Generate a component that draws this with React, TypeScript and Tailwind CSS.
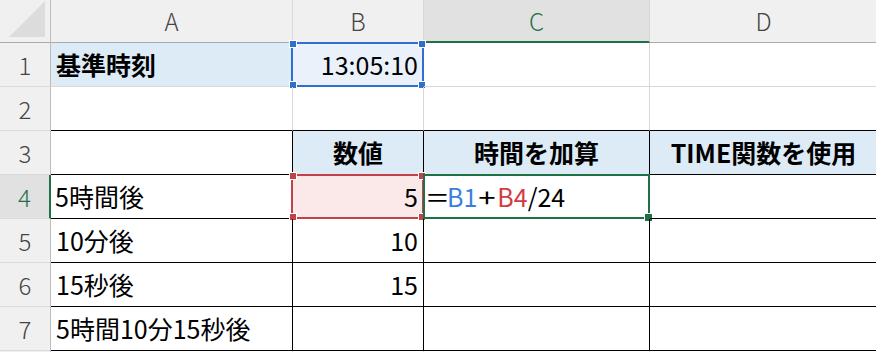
import React from "react";

const FONT = { fontFamily: '"Noto Sans CJK JP", "Noto Sans", sans-serif' };

type CellProps = {
  className: string;
  children?: React.ReactNode;
};

function Cell({ className, children }: CellProps) {
  return <div className={"relative flex items-center overflow-visible " + className}>{children}</div>;
}

function Handles({ color }: { color: string }) {
  const base = "absolute w-[6px] h-[6px] outline outline-1 outline-white " + color;
  return (
    <>
      <span className={base + " -left-[3px] -top-[3px]"} />
      <span className={base + " -right-[3px] -top-[3px]"} />
      <span className={base + " -left-[3px] -bottom-[3px]"} />
      <span className={base + " -right-[3px] -bottom-[3px]"} />
    </>
  );
}

const colHead = "justify-center bg-[#f0f0f0] border-r border-b border-r-[#d8d8d8] border-b-[#ababab] text-[24px] font-light text-[#444]";
const rowHead = "justify-center bg-[#f0f0f0] border-r border-b border-r-[#bcbcbc] border-b-[#dadada] text-[24px] font-light text-[#444]";
const plain = "border-r border-b border-[#d8d8d8]";
const gridBottomBlack = "border-r border-b border-r-[#d8d8d8] border-b-black";
const boxed = "border-r border-b border-black";

export default function App() {
  return (
    <div className="w-[876px] h-[352px] overflow-hidden bg-white text-[25px] text-black" style={FONT}>
      <div className="grid grid-cols-[51px_242px_131px_226px_228px] grid-rows-[43px_44px_44px_44px_44px_44px_44px_44px_44px]">
        {/* column headers */}
        <Cell className="bg-[#f0f0f0] border-r border-b border-r-[#bcbcbc] border-b-[#ababab]">
          <svg className="absolute right-[5px] bottom-[5px]" width="36" height="36" viewBox="0 0 36 36">
            <polygon points="36,0 36,36 0,36" fill="#dcdcdc" />
          </svg>
        </Cell>
        <Cell className={colHead}>A</Cell>
        <Cell className={colHead}>B</Cell>
        <Cell className="justify-center bg-[#e1e1e1] border-r border-r-[#d8d8d8] border-b-2 border-b-[#1e7145] text-[24px] font-light text-[#1e7145]">C</Cell>
        <Cell className={colHead}>D</Cell>

        {/* row 1 */}
        <Cell className={rowHead}>1</Cell>
        <Cell className={plain + " bg-[#ddebf7] pl-[5px] font-bold"}>基準時刻</Cell>
        <Cell className={plain + " bg-[#eaf1fa] justify-end pr-[5px]"}>
          13:05:10
          <div className="absolute -left-[2px] -top-[1px] -right-[1px] -bottom-[1px] border-2 border-[#2f6fd0]">
            <Handles color="bg-[#2f6fd0]" />
          </div>
        </Cell>
        <Cell className={plain} />
        <Cell className={plain} />

        {/* row 2 */}
        <Cell className={rowHead}>2</Cell>
        <Cell className={gridBottomBlack} />
        <Cell className={gridBottomBlack} />
        <Cell className={gridBottomBlack} />
        <Cell className={gridBottomBlack} />

        {/* row 3 */}
        <Cell className={rowHead}>3</Cell>
        <Cell className={boxed} />
        <Cell className={boxed + " bg-[#ddebf7] justify-center font-bold"}>数値</Cell>
        <Cell className={boxed + " bg-[#ddebf7] justify-center font-bold"}>時間を加算</Cell>
        <Cell className={boxed + " bg-[#ddebf7] justify-center font-bold"}>TIME関数を使用</Cell>

        {/* row 4 */}
        <Cell className="justify-center bg-[#e1e1e1] border-b border-b-[#dadada] border-r-2 border-r-[#1e7145] text-[24px] font-light text-[#1e7145]">4</Cell>
        <Cell className={boxed + " pl-[4px]"}>5時間後</Cell>
        <Cell className={boxed + " bg-[#fbe9e9] justify-end pr-[5px]"}>
          5
          <div className="absolute -left-[2px] -top-[1px] -right-[1px] -bottom-[1px] border-2 border-[#c3414a]">
            <Handles color="bg-[#c3414a]" />
          </div>
        </Cell>
        <Cell className={boxed + " pl-[4px]"}>
          <span className="inline-block w-[19px] text-center scale-x-150">=</span>
          <span className="text-[#3a7fe0]">B1</span>
          <span className="inline-block w-[20px] text-center scale-x-125">+</span>
          <span className="text-[#d43a42]">B4</span>
          <span>/24</span>
          <div className="absolute -left-[1px] -top-[1px] -right-[1px] -bottom-[1px] border-2 border-[#1e7145]">
            <span className="absolute -right-[4px] -bottom-[4px] w-[7px] h-[7px] bg-[#1e7145] outline outline-1 outline-white" />
          </div>
        </Cell>
        <Cell className={boxed} />

        {/* row 5 */}
        <Cell className={rowHead}>5</Cell>
        <Cell className={boxed + " pl-[5px]"}>10分後</Cell>
        <Cell className={boxed + " justify-end pr-[5px]"}>10</Cell>
        <Cell className={boxed} />
        <Cell className={boxed} />

        {/* row 6 */}
        <Cell className={rowHead}>6</Cell>
        <Cell className={boxed + " pl-[5px]"}>15秒後</Cell>
        <Cell className={boxed + " justify-end pr-[5px]"}>15</Cell>
        <Cell className={boxed} />
        <Cell className={boxed} />

        {/* row 7 */}
        <Cell className={rowHead}>7</Cell>
        <Cell className={boxed + " pl-[5px]"}>5時間10分15秒後</Cell>
        <Cell className={boxed} />
        <Cell className={boxed} />
        <Cell className={boxed} />

        {/* row 8, only its top edge shows */}
        <Cell className={rowHead} />
        <Cell className={plain} />
        <Cell className={plain} />
        <Cell className={plain} />
        <Cell className={plain} />
      </div>
    </div>
  );
}
